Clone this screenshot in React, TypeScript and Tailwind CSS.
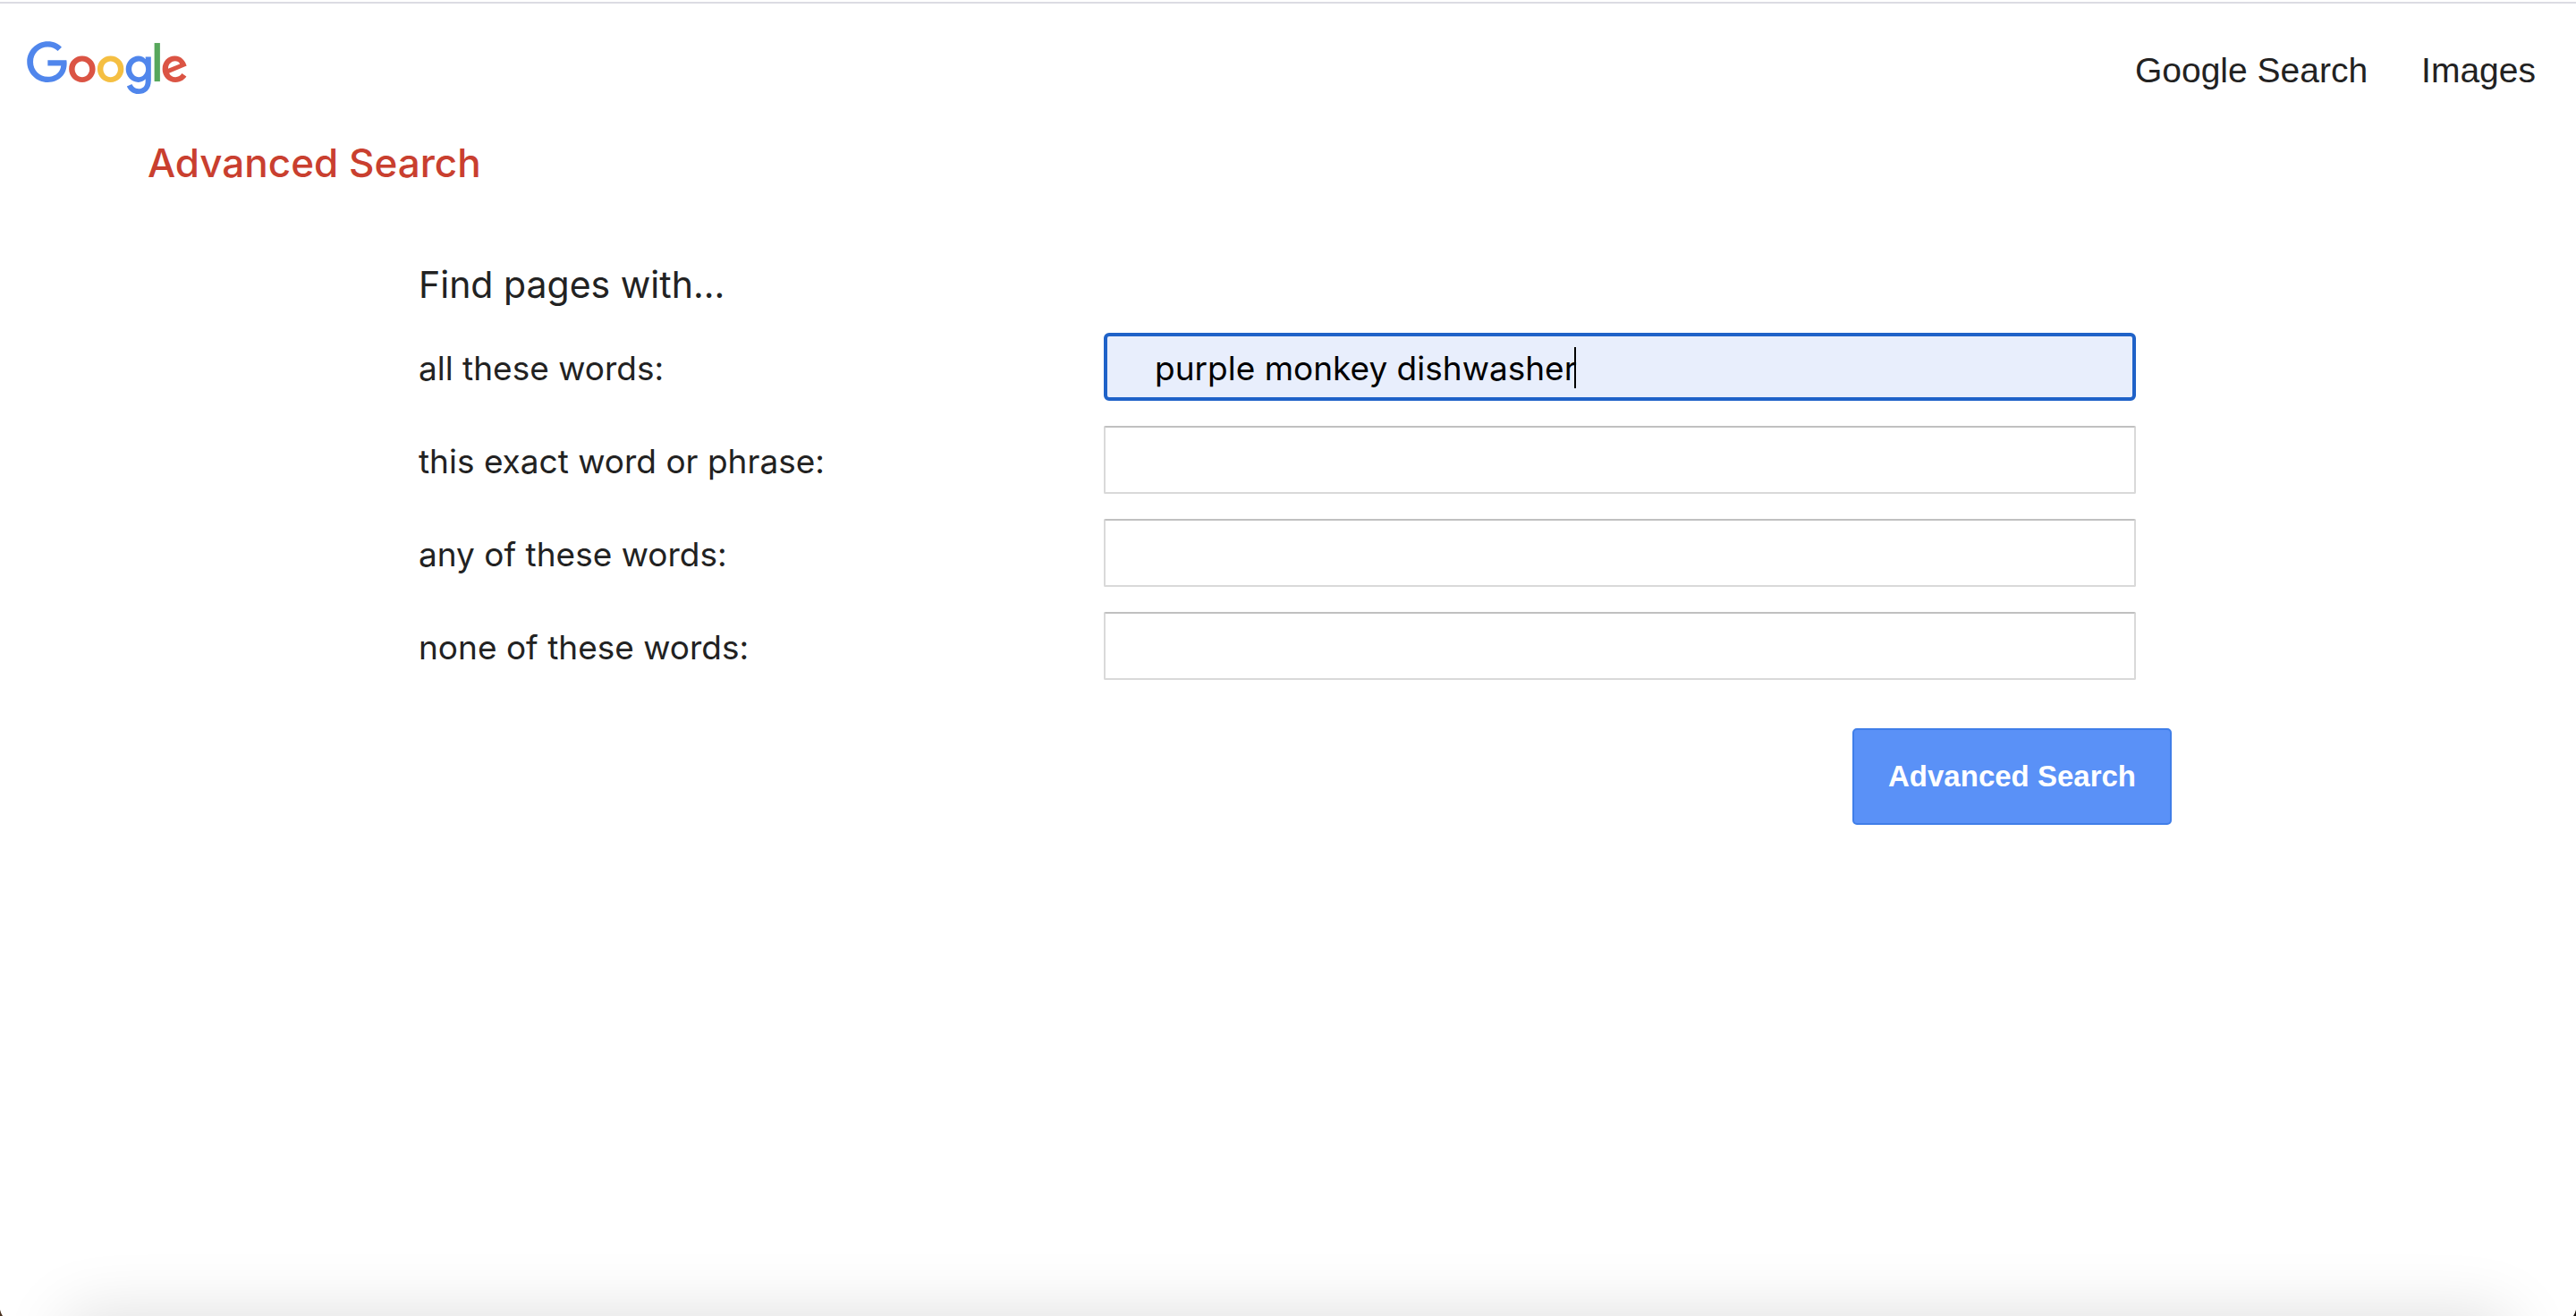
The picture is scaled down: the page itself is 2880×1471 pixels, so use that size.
import { useState } from "react";

const FIELDS = [
  { id: "as_q", label: "all these words:", initial: "purple monkey dishwasher" },
  { id: "as_epq", label: "this exact word or phrase:", initial: "" },
  { id: "as_oq", label: "any of these words:", initial: "" },
  { id: "as_eq", label: "none of these words:", initial: "" },
];

function GoogleLogo() {
  return (
    <svg viewBox="0 0 272 92" className="block h-[61px] w-[180px]" role="img" aria-label="Google">
      <path fill="#DB5444" d="M115.75 47.18c0 12.77-9.99 22.18-22.25 22.18s-22.25-9.41-22.25-22.18C71.25 34.32 81.24 25 93.5 25s22.25 9.32 22.25 22.18zm-9.74 0c0-7.98-5.79-13.44-12.51-13.44S80.99 39.2 80.99 47.18c0 7.9 5.79 13.44 12.51 13.44s12.51-5.55 12.51-13.44z" />
      <path fill="#F5BF42" d="M163.75 47.18c0 12.77-9.99 22.18-22.25 22.18s-22.25-9.41-22.25-22.18c0-12.85 9.99-22.18 22.25-22.18s22.25 9.32 22.25 22.18zm-9.74 0c0-7.98-5.79-13.44-12.51-13.44s-12.51 5.46-12.51 13.44c0 7.9 5.79 13.44 12.51 13.44s12.51-5.55 12.51-13.44z" />
      <path fill="#5086EC" d="M209.75 26.34v39.82c0 16.38-9.66 23.07-21.08 23.07-10.75 0-17.22-7.19-19.66-13.07l8.48-3.53c1.51 3.61 5.21 7.87 11.17 7.87 7.31 0 11.84-4.51 11.84-13v-3.19h-.34c-2.18 2.69-6.38 5.04-11.68 5.04-11.09 0-21.25-9.66-21.25-22.09 0-12.52 10.16-22.26 21.25-22.26 5.29 0 9.49 2.35 11.68 4.96h.34v-3.61h9.25zm-8.56 20.92c0-7.81-5.21-13.52-11.84-13.52-6.72 0-12.35 5.71-12.35 13.52 0 7.73 5.63 13.36 12.35 13.36 6.63 0 11.84-5.63 11.84-13.36z" />
      <path fill="#57A75C" d="M225 3v65h-9.5V3h9.5z" />
      <path fill="#DB5444" d="M262.02 54.48l7.56 5.04c-2.44 3.61-8.32 9.83-18.48 9.83-12.6 0-22.01-9.74-22.01-22.18 0-13.19 9.49-22.18 20.92-22.18 11.51 0 17.14 9.16 18.98 14.11l1.01 2.52-29.65 12.28c2.27 4.45 5.8 6.72 10.75 6.72 4.96 0 8.4-2.44 10.92-6.14zm-23.27-7.98l19.82-8.23c-1.09-2.77-4.37-4.7-8.23-4.7-4.95 0-11.84 4.37-11.59 12.93z" />
      <path fill="#5086EC" d="M35.29 41.41V32H67c.31 1.64.47 3.58.47 5.68 0 7.06-1.93 15.79-8.15 22.01-6.05 6.3-13.78 9.66-24.02 9.66C16.32 69.35.36 53.89.36 34.91.36 15.93 16.32.47 35.3.47c10.5 0 17.98 4.12 23.6 9.49l-6.64 6.64c-4.03-3.78-9.49-6.72-16.97-6.72-13.86 0-24.7 11.17-24.7 25.03 0 13.86 10.84 25.03 24.7 25.03 8.99 0 14.11-3.61 17.39-6.89 2.66-2.66 4.41-6.46 5.1-11.65l-22.49.01z" />
    </svg>
  );
}

function Header() {
  return (
    <header className="flex items-start justify-between pl-[30px] pr-[45px] pt-[42px]">
      <a href="#home">
        <GoogleLogo />
      </a>
      <nav className="flex gap-[60px] pt-[5px] font-['Liberation_Sans',Arial,sans-serif] text-[39px] leading-[56px] text-[#222222]">
        <a href="#search">Google Search</a>
        <a href="#images">Images</a>
      </nav>
    </header>
  );
}

function Field({ id, label, initial }: { id: string; label: string; initial: string }) {
  const [value, setValue] = useState(initial);
  const active = initial !== "";
  return (
    <div className="grid grid-cols-[766fr_1154fr] items-center">
      <label htmlFor={id} className="pt-1 text-[37px] leading-[56px]">
        {label}
      </label>
      <div className="relative">
        <input
          id={id}
          type="text"
          value={value}
          onChange={(e) => setValue(e.target.value)}
          className={
            active
              ? "block h-[76px] w-full rounded-md border-4 border-[#1f62c8] bg-[#e8eefc] pl-[53px] pt-0.5 text-[37px] text-black outline-none"
              : "block h-[76px] w-full rounded-[2px] border-2 border-[#d9d9d9] border-t-[#c0c0c0] bg-white px-[55px] pt-0.5 text-[37px] text-black outline-none"
          }
        />
        {active && <span className="absolute left-[526px] top-4 h-[46px] w-0.5 bg-black" />}
      </div>
    </div>
  );
}

export default function App() {
  return (
    <div className="relative min-h-screen overflow-hidden bg-white pt-0.5 font-['Inter',sans-serif] text-[#222222]">
      <div className="h-0.5 bg-[#dcdce3]" />
      <Header />
      <h1 className="pl-[165px] pt-[45px] text-[44px] font-medium leading-[60px] text-[#c93f2f]">Advanced Search</h1>
      <form className="pl-[468px] pr-[452px] pt-[76px]" onSubmit={(e) => e.preventDefault()}>
        <h2 className="text-[41px] leading-[60px]">Find pages with...</h2>
        <div className="flex flex-col gap-7 pr-10 pt-6">
          {FIELDS.map((f) => (
            <Field key={f.id} {...f} />
          ))}
        </div>
        <div className="flex justify-end pt-[54px]">
          <button
            type="submit"
            className="h-[108px] rounded-[5px] border-2 border-[#407ee8] bg-[#5a91f7] px-[38px] font-['Liberation_Sans',Arial,sans-serif] text-[33px] font-bold text-white"
          >
            Advanced Search
          </button>
        </div>
      </form>
      <div className="pointer-events-none absolute inset-x-[76px] top-full h-24 shadow-[0_0_76px_rgba(0,0,0,0.14)]" />
      <svg viewBox="0 0 3 7" className="absolute bottom-0 left-0 h-[7px] w-[3px]" aria-hidden="true">
        <path d="M0 0Q1 4 3 7H0z" fill="#4a3220" />
      </svg>
      <svg viewBox="0 0 3 7" className="absolute bottom-0 right-0 h-[7px] w-[3px]" aria-hidden="true">
        <path d="M3 0Q2 4 0 7H3z" fill="#1c120c" />
      </svg>
    </div>
  );
}
